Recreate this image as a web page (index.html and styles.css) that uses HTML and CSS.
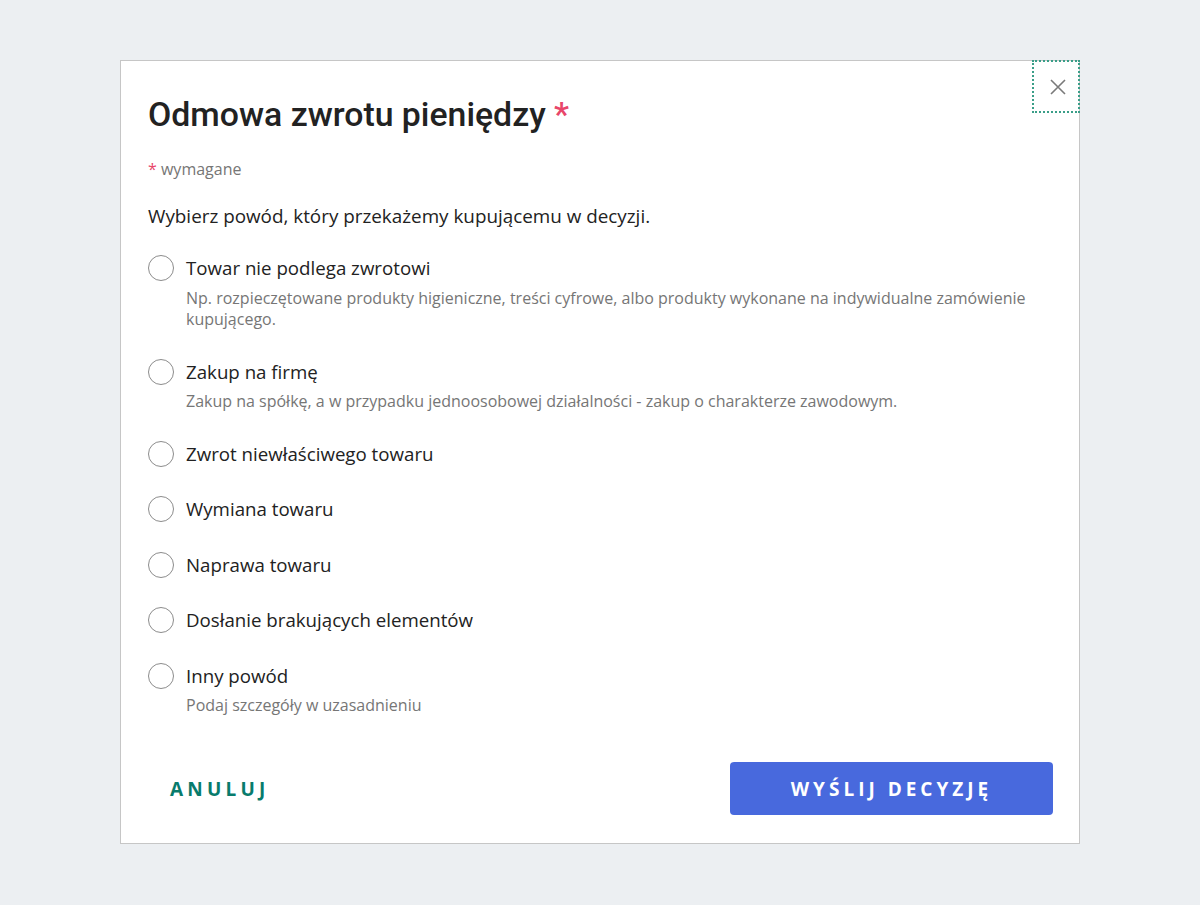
FILE: index.html
```html
<!DOCTYPE html>
<html lang="pl">
<head>
  <meta charset="UTF-8" />
  <meta name="viewport" content="width=device-width, initial-scale=1.0"/>
  <title>Odmowa zwrotu pieniędzy</title>
  <link rel="stylesheet" href="styles.css">
</head>
<body>
  <div class="modal" role="dialog" aria-labelledby="modal-title">
    <button class="close-button" aria-label="Zamknij">
      <svg width="18" height="18" viewBox="0 0 18 18">
        <path d="M2 2 L16 16 M16 2 L2 16" stroke="#7a7a7a" stroke-width="1.6" fill="none"/>
      </svg>
    </button>

    <h1 id="modal-title" class="modal-title">Odmowa zwrotu pieniędzy <span class="required">*</span></h1>
    <p class="required-note"><span class="required">*</span> wymagane</p>
    <p class="instruction">Wybierz powód, który przekażemy kupującemu w decyzji.</p>

    <div class="options">
      <label class="option">
        <input type="radio" name="reason" />
        <span class="option-text">
          <span class="option-label">Towar nie podlega zwrotowi</span>
          <span class="option-desc">Np. rozpieczętowane produkty higieniczne, treści cyfrowe, albo produkty wykonane na indywidualne zamówienie kupującego.</span>
        </span>
      </label>
      <label class="option">
        <input type="radio" name="reason" />
        <span class="option-text">
          <span class="option-label">Zakup na firmę</span>
          <span class="option-desc">Zakup na spółkę, a w przypadku jednoosobowej działalności - zakup o charakterze zawodowym.</span>
        </span>
      </label>
      <label class="option">
        <input type="radio" name="reason" />
        <span class="option-text">
          <span class="option-label">Zwrot niewłaściwego towaru</span>
        </span>
      </label>
      <label class="option">
        <input type="radio" name="reason" />
        <span class="option-text">
          <span class="option-label">Wymiana towaru</span>
        </span>
      </label>
      <label class="option">
        <input type="radio" name="reason" />
        <span class="option-text">
          <span class="option-label">Naprawa towaru</span>
        </span>
      </label>
      <label class="option">
        <input type="radio" name="reason" />
        <span class="option-text">
          <span class="option-label">Dosłanie brakujących elementów</span>
        </span>
      </label>
      <label class="option">
        <input type="radio" name="reason" />
        <span class="option-text">
          <span class="option-label">Inny powód</span>
          <span class="option-desc">Podaj szczegóły w uzasadnieniu</span>
        </span>
      </label>
    </div>

    <footer class="modal-footer">
      <button class="btn-cancel">Anuluj</button>
      <button class="btn-submit">Wyślij decyzję</button>
    </footer>
  </div>
</body>
</html>
```

FILE: styles.css
```css
* {
  margin: 0;
  padding: 0;
  box-sizing: border-box;
}

body {
  font-family: 'Open Sans', 'Liberation Sans', sans-serif;
  background-color: #eceff2;
  color: #222222;
  padding-top: 60px;
}

.modal {
  position: relative;
  width: 960px;
  height: 784px;
  margin: 0 auto;
  background-color: #ffffff;
  border: 1px solid #c6c6c6;
  padding: 35px 26px 28px 27px;
  display: flex;
  flex-direction: column;
}

.close-button {
  position: absolute;
  top: -1px;
  right: -1px;
  width: 48px;
  height: 53px;
  padding-left: 4px;
  background: transparent;
  border: 2px dotted #3a9e88;
  display: flex;
  align-items: center;
  justify-content: center;
  cursor: pointer;
}

.modal-title {
  font-family: Roboto, 'Open Sans', sans-serif;
  font-weight: 500;
  font-size: 33.8px;
  line-height: 38px;
  color: #222222;
}

.required {
  color: #e8466a;
}

.required-note {
  margin-top: 24px;
  font-size: 16px;
  line-height: 22px;
  color: #767676;
}

.instruction {
  margin-top: 23px;
  font-size: 18.85px;
  line-height: 26px;
  color: #222222;
}

.options {
  margin-top: 25px;
  display: flex;
  flex-direction: column;
  gap: 27px;
}

.option {
  display: flex;
  align-items: flex-start;
  gap: 12px;
  cursor: pointer;
}

.option input[type="radio"] {
  appearance: none;
  -webkit-appearance: none;
  width: 26px;
  height: 26px;
  margin-top: 1px;
  border: 1.5px solid #8c8c8c;
  border-radius: 50%;
  background: #ffffff;
  flex-shrink: 0;
  cursor: pointer;
}

.option-text {
  display: flex;
  flex-direction: column;
}

.option-label {
  font-size: 18.7px;
  line-height: 28.5px;
  color: #222222;
}

.option-desc {
  margin-top: 5px;
  font-size: 16px;
  line-height: 21.5px;
  color: #767676;
}

.modal-footer {
  margin-top: auto;
  display: flex;
  align-items: center;
  justify-content: space-between;
}

.btn-cancel {
  background: transparent;
  border: none;
  padding: 0 22px;
  height: 53px;
  font-family: 'Open Sans', sans-serif;
  font-weight: 700;
  font-size: 19px;
  letter-spacing: 4.2px;
  text-transform: uppercase;
  color: #087b6c;
  cursor: pointer;
}

.btn-submit {
  width: 323px;
  height: 53px;
  background-color: #4869dd;
  border: none;
  border-radius: 4px;
  font-family: 'Open Sans', sans-serif;
  font-weight: 700;
  font-size: 19px;
  letter-spacing: 4px;
  text-transform: uppercase;
  color: #ffffff;
  cursor: pointer;
}
```
